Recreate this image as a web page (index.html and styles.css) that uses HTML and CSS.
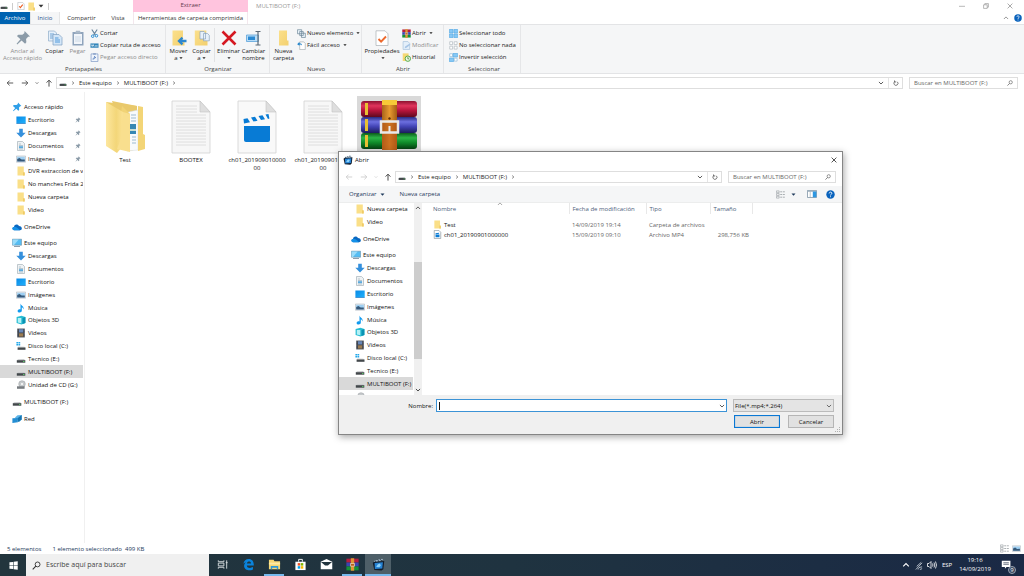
FILE: index.html
```html
<!DOCTYPE html>
<html lang="es">
<head>
<meta charset="utf-8">
<title>MULTIBOOT (F:)</title>
<link rel="stylesheet" href="styles.css">
</head>
<body>
<svg class="sprite" aria-hidden="true">
  <defs>
    <linearGradient id="gFold" x1="0" y1="0" x2="1" y2="1"><stop offset="0" stop-color="#fbe08c"/><stop offset="1" stop-color="#f3d06f"/></linearGradient>
    <linearGradient id="gFlap" x1="0" y1="0" x2="1" y2="0"><stop offset="0" stop-color="#fde79f"/><stop offset=".6" stop-color="#f3d679"/><stop offset="1" stop-color="#fbe294"/></linearGradient>
    <linearGradient id="gRed" x1="0" y1="0" x2="0" y2="1"><stop offset="0" stop-color="#8d1230"/><stop offset=".3" stop-color="#e0345c"/><stop offset=".6" stop-color="#b5143b"/><stop offset="1" stop-color="#5e0a1e"/></linearGradient>
    <linearGradient id="gBlue" x1="0" y1="0" x2="0" y2="1"><stop offset="0" stop-color="#2a2a80"/><stop offset=".3" stop-color="#6c6fe0"/><stop offset=".6" stop-color="#4243b4"/><stop offset="1" stop-color="#1c1c5c"/></linearGradient>
    <linearGradient id="gGreen" x1="0" y1="0" x2="0" y2="1"><stop offset="0" stop-color="#0b5a1a"/><stop offset=".3" stop-color="#2bb547"/><stop offset=".6" stop-color="#108a2a"/><stop offset="1" stop-color="#064012"/></linearGradient>
    <linearGradient id="gBelt" x1="0" y1="0" x2="1" y2="0"><stop offset="0" stop-color="#a8641a"/><stop offset=".5" stop-color="#e89a30"/><stop offset="1" stop-color="#a35c14"/></linearGradient>
    <linearGradient id="gDesk" x1="0" y1="0" x2="1" y2="1"><stop offset="0" stop-color="#0a8ae6"/><stop offset="1" stop-color="#1fb0fb"/></linearGradient>
  </defs>
  <symbol id="folder" viewBox="0 0 10 10"><path d="M1.500 .5h6.300v6.200h.9v2.800H1.500z" fill="#fadf88"/><path d="M7 6.200h1.700v3.300H7z" fill="#efcb66"/></symbol>
  <symbol id="star" viewBox="0 0 10 10"><path d="M6 .6 9.400 4 8.200 4.200 7 5.600l.2 2.400-.9.800-2-2L1.400 9.200 1 8.800l2.200-2.900-2.300-2 .9-.9 2.700.1L5.800 2z" fill="#2f9fe8"/></symbol>
  <symbol id="pin" viewBox="0 0 10 10"><path d="M6 .6 9.400 4 8.200 4.200 6.900 5.600l.2 2.100-.8.900L4.100 6.500 1.400 9 1 8.600l2.400-2.800-2.200-2 .9-.9 2.500.1L5.800 2z" fill="#8b9ba8"/></symbol>
  <symbol id="desktop" viewBox="0 0 10 10"><path d="M.4 1.500h9.300v6.700H.4z" fill="url(#gDesk)"/><path d="M.4 8h9.300v.7H.4z" fill="#0a6dc2"/></symbol>
  <symbol id="down" viewBox="0 0 10 10"><path d="M3.200.8h3.600v4h2.900L5 9.600.3 4.800h2.900z" fill="#3590dc"/></symbol>
  <symbol id="doc" viewBox="0 0 10 10"><path d="M1.500.5h5l2 2v7h-7z" fill="#eef2f4" stroke="#9aa7ae" stroke-width=".6"/><path d="M3 3h2M3 4.500h4M3 8h4" stroke="#92a6b3" stroke-width=".6"/><path d="M3 5.200h4v2H3z" fill="#5aa9dc"/></symbol>
  <symbol id="image" viewBox="0 0 10 10"><path d="M.4 2h9.200v6.200H.4z" fill="#e9eef2" stroke="#a2abb3" stroke-width=".5"/><path d="M1.200 2.800h7.600v4.600H1.200z" fill="#9fd0f3"/><path d="M1.200 5 3.500 4l2.200 1.600 3.100-.2v2H1.200z" fill="#36597a"/></symbol>
  <symbol id="cloud" viewBox="0 0 10 10"><path d="M2.200 8.200C-.3 8 0 5 2 4.900 2.400 2 6 1.700 6.900 4c2 .1 3 1.200 2.900 2.500 0 1-.7 1.700-1.800 1.700z" fill="#0a68c1"/><path d="M2 4.900c1.500-.5 2.600.2 6 3.300H2.200C-.3 8 0 5.200 2 4.900z" fill="#1491e8"/></symbol>
  <symbol id="pc" viewBox="0 0 10 10"><path d="M.4 1.200h9.200v6H.4z" fill="#55bdf3" stroke="#6d8ea5" stroke-width=".6"/><path d="M.7 1.500h6L2 7H.7z" fill="#9adcfa"/><path d="M2 8.200h6v.8H2z" fill="#74879a"/></symbol>
  <symbol id="music" viewBox="0 0 10 10"><path d="M4.500.5c.3 2 3.800 2.500 3 6-.3-1.400-1-2-1.700-2.300v3.600c-.1 2.300-4.300 2.300-4.200 0C1.800 6.300 3.500 5.900 4.500 6.400V.5z" fill="#109af0"/></symbol>
  <symbol id="cube" viewBox="0 0 10 10"><path d="M.6 2 5.500.7 9.400 2v6L5.500 9.500.6 8z" fill="#28bdd3"/><path d="M1.800 3h3.500v5.300L1.800 7.600z" fill="#b5f1f6"/><path d="m6.500 3 2.900-1v6l-2.900 1.100z" fill="#0b93b4"/></symbol>
  <symbol id="video" viewBox="0 0 10 10"><path d="M1.200.6h7.600v8.800H1.200z" fill="#3b4048"/><path d="M3 1.200h4.200v3.300H3z" fill="#6887b8"/><path d="M3 5.300h4.200v3.300H3z" fill="#9b7b52"/><path d="M1.800 1v8M8.200 1v8" stroke="#aab" stroke-width=".5" stroke-dasharray=".7 .7"/></symbol>
  <symbol id="drive" viewBox="0 0 10 10"><path d="m2 5.200 6-.1 1.300 1.300H.8z" fill="#c8cbcd"/><path d="M.8 6.200h8.500v2.500H.8z" fill="#43484b"/><path d="M7 7h1.500v.9H7z" fill="#58c466"/></symbol>
  <symbol id="win" viewBox="0 0 10 10"><path d="m2.400 5.600 6 .1 1 1.100H1.600z" fill="#c8cbcd"/><path d="M1.600 6.500h7.900v2.300H1.600z" fill="#43484b"/><path d="M.4 1h1.700v1.500H.4zm2.100 0h1.700v1.500H2.500zM.4 3h1.700v1.500H.4zm2.100 0h1.700v1.500H2.500z" fill="#23a8ea"/></symbol>
  <symbol id="cd" viewBox="0 0 10 10"><circle cx="6" cy="4" r="3.300" fill="#c6cacc" stroke="#989da1" stroke-width=".5"/><circle cx="6" cy="4" r="1" fill="#fff"/><path d="M1 6.300h7.600v2.500H1z" fill="#777c80"/></symbol>
  <symbol id="net" viewBox="0 0 10 10"><path d="m3 3.500 2.500-2.300L9.700 1v4.500L7.200 8z" fill="#5cb4e8"/><path d="M.4 4.200 5.800 4v4.200L.4 9z" fill="#248ed3"/><path d="m5.800 4 3.900-3v4.500L5.800 8.200z" fill="#1674b0"/></symbol>
  <symbol id="left" viewBox="0 0 10 10"><path d="M9 5H1.500m3-3-3 3 3 3" fill="none" stroke="currentColor" stroke-width="1.100"/></symbol>
  <symbol id="right" viewBox="0 0 10 10"><path d="M1 5h7.500m-3-3 3 3-3 3" fill="none" stroke="currentColor" stroke-width="1.100"/></symbol>
  <symbol id="up" viewBox="0 0 10 10"><path d="M5 9.500V1.500m-3 3 3-3 3 3" fill="none" stroke="currentColor" stroke-width="1.200"/></symbol>
  <symbol id="chev" viewBox="0 0 10 10"><path d="m1.500 3.200 3.500 3.500 3.500-3.500" fill="none" stroke="currentColor" stroke-width="1.600"/></symbol>
  <symbol id="chevup" viewBox="0 0 10 10"><path d="M1.500 6.700 5 3.200l3.500 3.500" fill="none" stroke="currentColor" stroke-width="1.400"/></symbol>
  <symbol id="crumb" viewBox="0 0 10 10"><path d="m3 1.500 4 3.500-4 3.500" fill="none" stroke="currentColor" stroke-width="1.900"/></symbol>
  <symbol id="caret" viewBox="0 0 10 10"><path d="M1 3h8L5 7.500z" fill="currentColor"/></symbol>
  <symbol id="reload" viewBox="0 0 10 10"><path d="M7.200 3A3.400 3.400 0 1 1 3 2.700M2.500.8v2.500h2.800" fill="none" stroke="currentColor" stroke-width="1.300"/></symbol>
  <symbol id="lens" viewBox="0 0 10 10"><circle cx="6.200" cy="3.800" r="2.700" fill="none" stroke="currentColor"/><path d="M4.300 5.800.8 9.300" stroke="currentColor" stroke-width="1.200"/></symbol>
  <symbol id="close" viewBox="0 0 10 10"><path d="m1 1 8 8M9 1 1 9" stroke="currentColor" stroke-width="1.200"/></symbol>
  <symbol id="help" viewBox="0 0 10 10"><circle cx="5" cy="5" r="4.700" fill="#0a63bd"/><path d="M3.500 3.800C3.600 1.800 6.600 2 6.500 3.700 6.400 4.800 5 4.700 5 6.100M5 7v1" fill="none" stroke="#fff"/></symbol>
  <symbol id="check" viewBox="0 0 10 10"><path d="M1 .5h6l2 2v7H1z" fill="#fff" stroke="#a2a9ae" stroke-width=".6"/><path d="m2.700 5.300 1.500 1.800 3-3.800" fill="none" stroke="#ea5b22" stroke-width="1.300"/></symbol>
  <symbol id="copy" viewBox="0 0 16 16"><path d="M1.500 1h6l2 2v8h-8z" fill="#e4effa" stroke="#8facc9" stroke-width=".7"/><path d="M3 4h4M3 6h3M3 8h3" stroke="#6fa4d6"/><path d="M6 4.500h6l3 3V15H6z" fill="#d3e6f8" stroke="#7f9fc0" stroke-width=".7"/><path d="M8 8h3.500M8 10h5M8 12h5" stroke="#529ada"/></symbol>
  <symbol id="paste" viewBox="0 0 16 16"><path d="M2.500 2h11v13.500h-11z" fill="#8fa4bc"/><path d="M4 4h8v10H4z" fill="#f1f5fa"/><path d="M6 .7h4l1 2.800H5z" fill="#a9b8c8"/><path d="M5 7h6M5 9h6M5 11h6" stroke="#c5d3e2" stroke-width=".8"/></symbol>
  <symbol id="cut" viewBox="0 0 10 10"><path d="m2 .5 4 6M8 .5l-4 6" stroke="#66839b" stroke-width="1.200"/><circle cx="3" cy="8" r="1.400" fill="none" stroke="#1683cf"/><circle cx="7.200" cy="7.500" r="1.400" fill="none" stroke="#1683cf"/></symbol>
  <symbol id="path" viewBox="0 0 10 10"><path d="M.5 2.700h9v4.800h-9z" fill="#3285b9"/><path d="m1.500 4 1 2 1-2 1 2m1-.5h3" fill="none" stroke="#fff" stroke-width=".8"/></symbol>
  <symbol id="plink" viewBox="0 0 10 10"><path d="M1.200 1h7.600v8.500H1.200z" fill="#eff4fb" stroke="#7e98c4" stroke-width=".8"/><path d="M3.500.4h3v1.400h-3z" fill="#7e98c4"/><path d="M3.500 7.500c0-2 .5-2.500 2.500-2.500m-1.500-1.500L6.300 5 4.700 6.500" fill="none" stroke="#4f78b8" stroke-width=".9"/></symbol>
  <symbol id="move" viewBox="0 0 16 16"><path d="M1.500.5h10.500v10.500h1.500V15.500h-12z" fill="url(#gFold)"/><path d="M15.500 11H8.500m3-3.300L8 11l3.500 3.300" fill="none" stroke="#2d87cf" stroke-width="2.300"/></symbol>
  <symbol id="copyto" viewBox="0 0 16 16"><path d="M.8.5h11.500V11h1.200v4.500H.8z" fill="url(#gFold)"/><path d="M6 1.500h4l1.500 1.500v6H6zM9.500 3.500h4l1.800 1.800v5.500H9.500z" fill="#e6f0fa" stroke="#8aa3bb" stroke-width=".7"/></symbol>
  <symbol id="delete" viewBox="0 0 16 16"><path d="m1.500 1.500 13 13m0-13-13 13" stroke="#d51821" stroke-width="2.600"/></symbol>
  <symbol id="rename" viewBox="0 0 16 16"><path d="M.5 5h12v6.500H.5z" fill="#b7dcf7" stroke="#5aa2d9" stroke-width=".8"/><path d="M2 6.500h7v3.500H2z" fill="#2c8ad3"/><path d="M9.500 1.500h5M9.500 15h5M12 1.500V15" stroke="#5d6b78" stroke-width="1.200"/></symbol>
  <symbol id="bigfolder" viewBox="0 0 16 16"><path d="M3 .5h8v10h1.500v5H3z" fill="url(#gFold)"/></symbol>
  <symbol id="newitem" viewBox="0 0 10 10"><path d="M.5.8h4.700v4.500H.5zM3 2.800h4v4.500H3zM5 4.700h4.300v4.800H5z" fill="#e8f2f9" stroke="#6f8899" stroke-width=".8"/></symbol>
  <symbol id="access" viewBox="0 0 10 10"><path d="M3 1h4.500L9.200 2.700V9.500H3z" fill="#fff" stroke="#8d989f" stroke-width=".6"/><path d="M.2 3.500 2.500 1l.3 1.500c2 0 2.700.8 2.700 2.500-1-1-1.500-1.200-2.600-1.100l-.2 1.400z" fill="#2486cc"/></symbol>
  <symbol id="props" viewBox="0 0 16 16"><path d="M2 .8h9l3 3v11.700H2z" fill="#fff" stroke="#a9afb3" stroke-width=".7"/><path d="m4.500 9 2.600 2.600L12 6.500" fill="none" stroke="#ed6a2e" stroke-width="1.900"/></symbol>
  <symbol id="rar" viewBox="0 0 10 10"><path d="M.3.5h9.400v3H.3z" fill="#b51d3f"/><path d="M.3 3.500h9.400v3H.3z" fill="#3d45b0"/><path d="M.3 6.500h9.400v3H.3z" fill="#159038"/><path d="M3.700.2h2.600v9.600H3.700z" fill="#e19534"/><path d="M3.500 4.200h3v2.100h-3z" fill="#b75f17" stroke="#f2e8da" stroke-width=".5"/></symbol>
  <symbol id="edit" viewBox="0 0 10 10"><path d="M1.200.6h5.300l2 2v6.800H1.200z" fill="#e4effa" stroke="#a1bedb" stroke-width=".7"/><path d="m3 8 .5-1.800L8.200 3l1.200 1.200L5 7.500z" fill="#a7c5e5"/></symbol>
  <symbol id="history" viewBox="0 0 10 10"><path d="M.8.4h6.500v8.500H.8z" fill="#f6d874"/><circle cx="6.500" cy="6.300" r="3" fill="#edf7e6" stroke="#4ba33c"/><path d="M6.500 4.500v2H8" fill="none" stroke="#387e2c" stroke-width=".8"/></symbol>
  <symbol id="selall" viewBox="0 0 10 10"><path d="M.4.4h4.100v4.100H.4zm5.100 0h4.100v4.100H5.500zM.4 5.500h4.100v4.100H.4zm5.100 0h4.100v4.100H5.500z" fill="#86c8f5" stroke="#4ba4e2" stroke-width=".6"/></symbol>
  <symbol id="selnone" viewBox="0 0 10 10"><path d="M.8.8h3.200v3.200H.8zm5 0H9v3.200H5.800zM.8 5.800H4V9H.8zm5 0H9V9H5.800z" fill="#fff" stroke="#aab4bb" stroke-width=".7"/></symbol>
  <symbol id="selinv" viewBox="0 0 10 10"><path d="M.8.8h3.200v3.200H.8zm5 5H9V9H5.800z" fill="#fff" stroke="#8bb6d6" stroke-width=".7"/><path d="M4.500.4h5.100v4.100H4.500zM.4 5.500h4.700v4.100H.4z" fill="#86c8f5" stroke="#4ba4e2" stroke-width=".6"/></symbol>
  <symbol id="details" viewBox="0 0 10 10"><path d="M.5 1h3v2h-3zM.5 4h3v2h-3zM.5 7h3v2h-3z" fill="none" stroke="currentColor" stroke-width=".6"/><path d="M4.700 2H7m.8 0h2M4.700 5H7m.8 0h2M4.700 8H7m.8 0h2" stroke="currentColor" stroke-width=".8"/></symbol>
  <symbol id="pane" viewBox="0 0 10 10"><path d="M.5 1.500h9v7h-9z" fill="#fff" stroke="#6f879b" stroke-width=".7"/><path d="M.5 1.500h9v1.300h-9z" fill="#9eb0bf"/><path d="M5.800 2.500h3.600v5.800H5.800z" fill="#2c97e2"/><path d="M3.200 2.500v6" stroke="#8ea1b0" stroke-width=".6"/></symbol>
  <symbol id="app" viewBox="0 0 14 14"><path d="M2 3 11 .8l1 1.200-9 2.500z" fill="#a9bdca"/><path d="m.8 5.200 1.200-1 11.200-1-1 8.800-2 1.500-7.700-.5z" fill="#101c2c"/><path d="m2.800 5.300 8.900-.8-.6 6.700-8 .7z" fill="#2683d4"/><path d="m4.500 9.800 1.600-2.700L8.500 6l1 2-1.600 2z" fill="#8bd2fb"/><path d="m3 3 1.500 1M6 2.200 7.500 3.500M9 1.500l1.500 1.300" stroke="#132236"/></symbol>
  <symbol id="bfolder" viewBox="0 0 40 54"><path d="M1 2 32 6v8l1 22 5 0v12l-14 3z" fill="#eccb66"/><path d="m7 1 25 5v6L10 10z" fill="#e9c96c"/><path d="m19 13 14-3v40l-11 1z" fill="#f8fafb" stroke="#d5dadd" stroke-width=".5"/><path d="M26 15h5M26 18h5M26 21h5M27 37h4M27 40h4M27 43h4" stroke="#9dbbd0"/><path d="M25 24h6v10h-6z" fill="#3688b4"/><path d="M25 29h6v2h-6z" fill="#c9dfd3"/><path d="M33 6 38 7v27l2 1v14l-7 2z" fill="#f3d577"/><path d="m17 6 8 8v37l-14-4z" fill="#f1d376"/><path d="m1 2 17 10v34l-6 7L1 46z" fill="url(#gFlap)"/><path d="m18 12 7 2v38l-13-3 3-8z" fill="#f9df8e"/></symbol>
  <symbol id="btext" viewBox="0 0 40 54"><path d="M1 1h28l10 11v41H1z" fill="#f7f7f7" stroke="#d2d2d2" stroke-width=".8"/><path d="M29 1v11h10z" fill="#dedede" stroke="#c4c4c4" stroke-width=".6"/><path d="M5 6h21M5 9h21M5 12h21M5 15h30M5 18h30M5 21h30M5 24h30M5 27h30M5 30h30M5 33h30M5 36h30M5 39h30M5 42h30M5 45h30" stroke="#d8d8d8" stroke-width=".8"/></symbol>
  <symbol id="bvideo" viewBox="0 0 40 54"><path d="M1 1h28l10 11v41H1z" fill="#f9f9f9" stroke="#d2d2d2" stroke-width=".8"/><path d="M29 1v11h10z" fill="#dedede" stroke="#c4c4c4" stroke-width=".6"/><path d="M7 26h26v14q0 2-2 2H9q-2 0-2-2z" fill="#087bd5"/><path d="m6.500 19 4-.8 2.500 4-6 1.300zM14 17.500l4-.8 2.500 4-4 .8zM21.500 16l4-.8 2.500 4-4 .8zM28.500 14.600l3-.6.9 4.600-1.400.3z" fill="#087bd5"/></symbol>
  <symbol id="brar" viewBox="0 0 58 50"><rect x="1" y="1" width="56" height="16" rx="3" fill="url(#gRed)"/><rect x="1" y="17" width="56" height="16" rx="3" fill="url(#gBlue)"/><rect x="1" y="33" width="56" height="16" rx="3" fill="url(#gGreen)"/><path d="M5 3h3v12H5zM5 19h3v12H5zM5 35h3v12H5z" fill="#e9bf34"/><path d="M22 0h15v50H22z" fill="url(#gBelt)"/><path d="M22 0h15v5H22z" fill="#f7c938"/><path d="M22 23h15v27H22z" fill="#b95618" fill-opacity=".6"/><circle cx="29.500" cy="18.500" r="1.200" fill="#603008"/><path d="M21 21.500h17v11H21z" fill="none" stroke="#e9e9ea" stroke-width="2.500"/><path d="M29.500 26v6" stroke="#e9e9ea" stroke-width="2"/></symbol>
  <symbol id="mp4" viewBox="0 0 10 10"><path d="M1.400.5h5.200l2 2v7H1.400z" fill="#fff" stroke="#7e8c96" stroke-width=".7"/><path d="M2.800 5h4.400v3H2.800zM2.800 3.600l4-.6v1.200l-4 .5z" fill="#087bd5"/></symbol>
</svg>

<header>
  <div class="titlebar">
    <div class="quick">
      <svg class="i8"><use href="#drive"/></svg><span class="bar"></span><svg class="i8"><use href="#check"/></svg><svg class="i9"><use href="#folder"/></svg><svg class="i6"><use href="#caret"/></svg><span class="bar"></span>
    </div>
    <div class="context">Extraer</div>
    <h1 class="title">MULTIBOOT (F:)</h1>
    <div class="winbtns">
      <button aria-label="Minimizar"><svg class="i6" viewBox="0 0 10 10"><path d="M0 5.500h10" stroke="currentColor"/></svg></button>
      <button aria-label="Restaurar"><svg class="i6" viewBox="0 0 10 10"><path d="M1 3h6v6H1zM3 3V1h6v6H7" fill="none" stroke="currentColor"/></svg></button>
      <button aria-label="Cerrar"><svg class="i6"><use href="#close"/></svg></button>
    </div>
  </div>
  <nav class="tabs">
    <button class="tab file">Archivo</button><button class="tab on">Inicio</button><button class="tab share">Compartir</button><button class="tab view">Vista</button><button class="tab tools">Herramientas de carpeta comprimida</button>
    <div class="tabend"><svg class="i6"><use href="#chevup"/></svg><svg class="i8"><use href="#help"/></svg></div>
  </nav>
  <div class="ribbon">
    <section class="group g1"><div class="cmds">
      <button class="big w41 dim"><svg><use href="#pin"/></svg>Anclar al<br>Acceso rápido</button>
      <button class="big w22"><svg><use href="#copy"/></svg>Copiar</button>
      <button class="big w22 dim"><svg><use href="#paste"/></svg>Pegar</button>
      <div class="smalls"><button><svg><use href="#cut"/></svg>Cortar</button><button><svg><use href="#path"/></svg>Copiar ruta de acceso</button><button class="dim"><svg><use href="#plink"/></svg>Pegar acceso directo</button></div>
    </div><h2>Portapapeles</h2></section>
    <section class="group g2"><div class="cmds">
      <button class="big w22"><svg><use href="#move"/></svg>Mover<br>a<svg class="dd"><use href="#caret"/></svg></button>
      <button class="big w22"><svg><use href="#copyto"/></svg>Copiar<br>a<svg class="dd"><use href="#caret"/></svg></button>
      <span class="rule"></span>
      <button class="big w25"><svg><use href="#delete"/></svg>Eliminar<br><svg class="dd"><use href="#caret"/></svg></button>
      <button class="big w25"><svg><use href="#rename"/></svg>Cambiar<br>nombre</button>
    </div><h2>Organizar</h2></section>
    <section class="group g3"><div class="cmds">
      <button class="big w25"><svg><use href="#bigfolder"/></svg>Nueva<br>carpeta</button>
      <div class="smalls"><button><svg><use href="#newitem"/></svg>Nuevo elemento<svg class="dd"><use href="#caret"/></svg></button><button><svg><use href="#access"/></svg>Fácil acceso<svg class="dd"><use href="#caret"/></svg></button></div>
    </div><h2>Nuevo</h2></section>
    <section class="group g4"><div class="cmds">
      <button class="big w38"><svg><use href="#props"/></svg>Propiedades<br><svg class="dd"><use href="#caret"/></svg></button>
      <div class="smalls"><button><svg><use href="#rar"/></svg>Abrir<svg class="dd"><use href="#caret"/></svg></button><button class="dim"><svg><use href="#edit"/></svg>Modificar</button><button><svg><use href="#history"/></svg>Historial</button></div>
    </div><h2>Abrir</h2></section>
    <section class="group g5"><div class="cmds">
      <div class="smalls"><button><svg><use href="#selall"/></svg>Seleccionar todo</button><button><svg><use href="#selnone"/></svg>No seleccionar nada</button><button><svg><use href="#selinv"/></svg>Invertir selección</button></div>
    </div><h2>Seleccionar</h2></section>
  </div>
</header>

<div class="navrow">
  <div class="arrows"><svg class="i8"><use href="#left"/></svg><svg class="i8"><use href="#right"/></svg><svg class="i4"><use href="#chev"/></svg><svg class="i8"><use href="#up"/></svg></div>
  <div class="address"><svg class="i8"><use href="#drive"/></svg><svg class="i4"><use href="#crumb"/></svg><a href="#pc">Este equipo</a><svg class="i4"><use href="#crumb"/></svg><a href="#f">MULTIBOOT (F:)</a><svg class="i4"><use href="#crumb"/></svg><span class="fill"></span><svg class="i6"><use href="#chev"/></svg><span class="reload"><svg class="i6"><use href="#reload"/></svg></span></div>
  <label class="search"><input type="text" aria-label="Buscar" placeholder="Buscar en MULTIBOOT (F:)"><svg class="i6"><use href="#lens"/></svg></label>
</div>

<main>
  <nav class="tree">
    <div class="rows quickrows">
      <a class="row top" href="#q"><svg><use href="#star"/></svg>Acceso rápido</a>
      <a class="row" href="#q"><svg><use href="#desktop"/></svg>Escritorio<svg class="pinned"><use href="#pin"/></svg></a>
      <a class="row" href="#q"><svg><use href="#down"/></svg>Descargas<svg class="pinned"><use href="#pin"/></svg></a>
      <a class="row" href="#q"><svg><use href="#doc"/></svg>Documentos<svg class="pinned"><use href="#pin"/></svg></a>
      <a class="row" href="#q"><svg><use href="#image"/></svg>Imágenes<svg class="pinned"><use href="#pin"/></svg></a>
      <a class="row" href="#q"><svg><use href="#folder"/></svg>DVR extraccion de v</a>
      <a class="row" href="#q"><svg><use href="#folder"/></svg>No manches Frida 2</a>
      <a class="row" href="#q"><svg><use href="#folder"/></svg>Nueva carpeta</a>
      <a class="row" href="#q"><svg><use href="#folder"/></svg>Video</a>
    </div>
    <div class="rows one"><a class="row top" href="#o"><svg><use href="#cloud"/></svg>OneDrive</a></div>
    <div class="rows pcrows">
      <a class="row top" href="#p"><svg><use href="#pc"/></svg>Este equipo</a>
      <a class="row" href="#p"><svg><use href="#down"/></svg>Descargas</a>
      <a class="row" href="#p"><svg><use href="#doc"/></svg>Documentos</a>
      <a class="row" href="#p"><svg><use href="#desktop"/></svg>Escritorio</a>
      <a class="row" href="#p"><svg><use href="#image"/></svg>Imágenes</a>
      <a class="row" href="#p"><svg><use href="#music"/></svg>Música</a>
      <a class="row" href="#p"><svg><use href="#cube"/></svg>Objetos 3D</a>
      <a class="row" href="#p"><svg><use href="#video"/></svg>Vídeos</a>
      <a class="row" href="#p"><svg><use href="#win"/></svg>Disco local (C:)</a>
      <a class="row" href="#p"><svg><use href="#drive"/></svg>Tecnico (E:)</a>
      <a class="row sel" href="#p"><svg><use href="#drive"/></svg>MULTIBOOT (F:)</a>
      <a class="row" href="#p"><svg><use href="#cd"/></svg>Unidad de CD (G:)</a>
    </div>
    <div class="rows one"><a class="row top" href="#m"><svg><use href="#drive"/></svg>MULTIBOOT (F:)</a></div>
    <div class="rows one"><a class="row top" href="#r"><svg><use href="#net"/></svg>Red</a></div>
  </nav>
  <div class="files">
    <figure><svg><use href="#bfolder"/></svg><figcaption>Test</figcaption></figure>
    <figure><svg><use href="#btext"/></svg><figcaption>BOOTEX</figcaption></figure>
    <figure><svg><use href="#bvideo"/></svg><figcaption>ch01_20190901000000</figcaption></figure>
    <figure><svg><use href="#btext"/></svg><figcaption>ch01_20190901000000</figcaption></figure>
    <figure class="picked"><svg><use href="#brar"/></svg></figure>
  </div>
</main>

<footer class="status"><span>5 elementos</span><span>1 elemento seleccionado&nbsp; 499 KB</span><span class="fill"></span><svg class="i9 gray"><use href="#details"/></svg><svg class="i9"><use href="#image"/></svg></footer>

<div class="taskbar">
  <button class="start" aria-label="Inicio"><svg viewBox="0 0 10 10"><path d="M.5 1.500 4.600 1v3.700H.5zM5.200.9 9.700.3v4.400H5.200zM.5 5.300h4.100V9L.5 8.500zm4.700 0h4.500v4.400l-4.500-.6z" fill="#fff"/></svg></button>
  <label class="tsearch"><svg class="i9"><use href="#lens"/></svg><input type="text" aria-label="Buscar en Windows" placeholder="Escribe aquí para buscar"></label>
  <button class="task" aria-label="Vista de tareas"><svg viewBox="0 0 14 14"><path d="M2.500 2.500V4h6V2.500M2.500 11.500V10h6v1.500M2.500 5.500h6v3h-6zM11.500 2.500v9M10.500 5h2" fill="none" stroke="#d7dde0"/></svg></button>
  <button class="task" aria-label="Edge"><svg viewBox="0 0 14 14"><path d="M1.500 6.300C2 2.800 4.300 1 7.200 1c3.700 0 5.700 2.700 5.500 7H5.200c.2 3.100 4 3.300 6.600 1.800v2.600C7.300 14.600 1.700 12.600 2.300 8c.2-1.500 1-2.600 2.200-3.400-1 .2-2.200.8-3 1.700zM5.300 6h4.400C9.600 3.200 5.700 3.200 5.300 6z" fill="#0a83dc"/></svg></button>
  <button class="task open" aria-label="Explorador"><svg viewBox="0 0 14 14"><path d="M1 2h5l1 1.500h6V12H1z" fill="#f7d774"/><path d="M1 5h12v2H1z" fill="#fdeaa5"/><path d="M3 8.500h8V12H9.500v-1.500h-5V12H3z" fill="#2e98d8"/></svg></button>
  <button class="task" aria-label="Tienda"><svg viewBox="0 0 14 14"><path d="M5 4V1.500h4V4" fill="none" stroke="#fff"/><path d="M1.500 4h11v9h-11z" fill="#fff"/><path d="M4 5.500h2.700v2.700H4z" fill="#f05223"/><path d="M7.300 5.500H10v2.700H7.300z" fill="#7eb900"/><path d="M4 8.800h2.700v2.700H4z" fill="#00a3ee"/><path d="M7.300 8.800H10v2.700H7.300z" fill="#fdb800"/></svg></button>
  <button class="task" aria-label="Correo"><svg viewBox="0 0 14 14"><path d="M.8 4 7 1l6.200 3v8H.8z" fill="#fff"/><path d="M1 4.200h12L8.500 8h-3z" fill="#22353f"/></svg></button>
  <button class="task open" aria-label="WinRAR"><svg><use href="#rar"/></svg></button>
  <button class="task open active" aria-label="Reproductor"><svg><use href="#app"/></svg></button>
  <span class="fill"></span>
  <div class="tray">
    <svg class="i8"><use href="#chevup"/></svg>
    <svg class="i9" viewBox="0 0 10 10"><path d="M2 9.500 9 2M4.500 9.500C4.500 8 5.500 7 9 6.500M6.500 9.500 9 8.500M3 6l5-4.500" fill="none" stroke="#d3dae1" stroke-width=".9"/></svg>
    <svg class="i10" viewBox="0 0 10 10"><path d="M.5 3.500H2L4 1.500v7L2 6.500H.5zM5.500 3.500q1 1.500 0 3M7 2.500q1.600 2.500 0 5M8.500 1.500q2 3.500 0 7" fill="none" stroke="#fff" stroke-width=".8"/></svg>
    <span>ESP</span>
    <div class="clock">19:16<br>14/09/2019</div>
    <div class="note"><svg viewBox="0 0 14 14"><path d="M1 1h11v8H7l-2 2V9H1z" fill="#fff"/><path d="M3 3.500h7M3 5.500h7" stroke="#1b2a42" stroke-width=".8"/></svg><b>9</b></div>
  </div>
</div>

<div class="dialog" role="dialog" aria-label="Abrir">
  <div class="dtitle"><svg class="i10"><use href="#app"/></svg>Abrir<span class="fill"></span><button aria-label="Cerrar"><svg class="i6"><use href="#close"/></svg></button></div>
  <div class="navrow dnav">
    <div class="arrows"><svg class="i8 off"><use href="#left"/></svg><svg class="i8 off"><use href="#right"/></svg><svg class="i4 off"><use href="#chev"/></svg><svg class="i8"><use href="#up"/></svg></div>
    <div class="address"><svg class="i8"><use href="#drive"/></svg><svg class="i4"><use href="#crumb"/></svg><a href="#pc">Este equipo</a><svg class="i4"><use href="#crumb"/></svg><a href="#f">MULTIBOOT (F:)</a><svg class="i4"><use href="#crumb"/></svg><span class="fill"></span><svg class="i6"><use href="#chev"/></svg><span class="reload"><svg class="i6"><use href="#reload"/></svg></span></div>
    <label class="search"><input type="text" aria-label="Buscar" placeholder="Buscar en MULTIBOOT (F:)"><svg class="i6"><use href="#lens"/></svg></label>
  </div>
  <div class="dtools"><button>Organizar<svg class="i5"><use href="#caret"/></svg></button><button>Nueva carpeta</button><span class="fill"></span><svg class="i9 gray"><use href="#details"/></svg><svg class="i5"><use href="#caret"/></svg><svg class="i10 pane"><use href="#pane"/></svg><svg class="i9"><use href="#help"/></svg></div>
  <div class="dbody">
    <nav class="tree dtree">
      <div class="rows two">
        <a class="row" href="#q"><svg><use href="#folder"/></svg>Nueva carpeta</a>
        <a class="row" href="#q"><svg><use href="#folder"/></svg>Video</a>
      </div>
      <div class="rows one"><a class="row top" href="#o"><svg><use href="#cloud"/></svg>OneDrive</a></div>
      <div class="rows pcrows">
        <a class="row top" href="#p"><svg><use href="#pc"/></svg>Este equipo</a>
        <a class="row" href="#p"><svg><use href="#down"/></svg>Descargas</a>
        <a class="row" href="#p"><svg><use href="#doc"/></svg>Documentos</a>
        <a class="row" href="#p"><svg><use href="#desktop"/></svg>Escritorio</a>
        <a class="row" href="#p"><svg><use href="#image"/></svg>Imágenes</a>
        <a class="row" href="#p"><svg><use href="#music"/></svg>Música</a>
        <a class="row" href="#p"><svg><use href="#cube"/></svg>Objetos 3D</a>
        <a class="row" href="#p"><svg><use href="#video"/></svg>Vídeos</a>
        <a class="row" href="#p"><svg><use href="#win"/></svg>Disco local (C:)</a>
        <a class="row" href="#p"><svg><use href="#drive"/></svg>Tecnico (E:)</a>
        <a class="row sel" href="#p"><svg><use href="#drive"/></svg>MULTIBOOT (F:)</a>
        <a class="row" href="#p" aria-label="CD"><svg><use href="#cd"/></svg></a>
      </div>
    </nav>
    <div class="scroll"><svg class="i6"><use href="#chevup"/></svg><div class="track"><div class="thumb"></div></div><svg class="i6"><use href="#chev"/></svg></div>
    <div class="listing">
      <svg class="i6 sort"><use href="#chevup"/></svg>
      <table>
        <colgroup><col class="c1"><col class="c2"><col class="c3"><col class="c4"><col></colgroup>
        <thead><tr><th>Nombre</th><th>Fecha de modificación</th><th>Tipo</th><th>Tamaño</th><td></td></tr></thead>
        <tbody>
          <tr><td class="name"><span><svg class="i9"><use href="#folder"/></svg>Test</span></td><td>14/09/2019 19:14</td><td>Carpeta de archivos</td><td></td><td></td></tr>
          <tr><td class="name"><span><svg class="i9"><use href="#mp4"/></svg>ch01_20190901000000</span></td><td>15/09/2019 09:10</td><td>Archivo MP4</td><td class="size">298,756 KB</td><td></td></tr>
        </tbody>
      </table>
    </div>
  </div>
  <div class="dfoot">
    <label for="fname">Nombre:</label>
    <div class="combo"><input id="fname" type="text"><span class="cursor"></span><svg class="i6"><use href="#chev"/></svg></div>
    <div class="kind"><select aria-label="Tipo de archivo"><option>File(*.mp4;*.264)</option></select><svg class="i6"><use href="#chev"/></svg></div>
    <div class="actions"><button class="ok">Abrir</button><button>Cancelar</button></div>
    <svg class="grip" viewBox="0 0 6 6"><path d="M4 0h1v1H4zM2 2h1v1H2zM4 2h1v1H4zM0 4h1v1H0zM2 4h1v1H2zM4 4h1v1H4z" fill="#b0b0b0"/></svg>
  </div>
</div>
</body>
</html>
```
FILE: styles.css
```css
* { box-sizing: border-box; }
body { margin: 0; height: 100vh; display: flex; flex-direction: column; background: #fff; color: #111; font: 6px/8px "Open Sans", "Noto Sans", sans-serif; overflow: hidden; position: relative; }
button, input, select { font: inherit; color: inherit; border: 0; padding: 0; margin: 0; background: none; border-radius: 0; outline: 0; }
button { display: flex; align-items: center; justify-content: center; white-space: nowrap; }
a { color: inherit; text-decoration: none; white-space: nowrap; }
h1, h2, figure { margin: 0; font: inherit; }
svg { flex: none; display: block; }
.sprite { position: absolute; width: 0; height: 0; }
.i4 { width: 4px; height: 4px; }
.i5 { width: 5px; height: 5px; }
.i6 { width: 6px; height: 6px; }
.i8 { width: 8px; height: 8px; }
.i9 { width: 9px; height: 9px; }
.i10 { width: 10px; height: 10px; }
.fill { flex: 1; }
.off { color: #ccc; }
.gray { color: #8c9297; }

.titlebar { display: flex; height: 12px; }
.quick { width: 133px; display: flex; align-items: center; gap: 2px; color: #333; }
.quick .bar { width: 1px; height: 7px; margin: 0 2px; background: #ccc; }
.context { width: 115px; background: #ffc4de; color: #643c4f; text-align: center; line-height: 11px; }
.title { flex: 1; padding-left: 8px; color: #999; line-height: 12px; }
.winbtns { display: flex; gap: 18px; padding-right: 11px; color: #888; }
.tabs { display: flex; height: 12px; color: #333; }
.tab { height: 12px; }
.file { width: 30px; background: #0063b1; color: #fff; }
.on { width: 30px; background: #f5f6f7; border: 1px solid #e4e5e6; border-width: 0 1px; color: #1f4e8c; }
.share { width: 43px; }
.view { width: 30px; }
.tools { width: 115px; border: 1px solid #f3e7ed; border-width: 0 1px; }
.tabend { flex: 1; display: flex; justify-content: flex-end; align-items: center; gap: 5px; padding-right: 2px; color: #888; }

.ribbon { display: flex; height: 50px; background: #f5f6f7; border: 1px solid #e3e4e6; border-width: 1px 0; color: #222; }
.group { display: flex; flex-direction: column; justify-content: space-between; border-right: 1px solid #e5e6e8; }
.group h2 { text-align: center; line-height: 8px; color: #444; }
.g1 { width: 166px; padding-left: 2px; }
.g2 { width: 104px; padding-left: 1px; }
.g3 { width: 92px; padding-left: 1px; }
.g4 { width: 82px; padding-left: 1px; }
.g5 { width: 77px; padding-left: 4px; }
.cmds { display: flex; padding-top: 3px; }
.big { display: block; text-align: center; line-height: 7px; align-self: flex-start; }
.big > svg { width: 16px; height: 16px; margin: 2px auto; }
.big .dd, .dd { display: inline-block; width: 4px; height: 4px; margin: 0 0 0 1px; }
.w22 { width: 23px; }
.w25 { width: 25px; }
.w38 { width: 38px; }
.w41 { width: 41px; }
.rule { width: 1px; margin: 0 1px; background: #e1e2e4; }
.smalls { display: flex; flex-direction: column; gap: 2px; padding-left: 1px; }
.smalls button { height: 10px; gap: 1px; justify-content: flex-start; }
.smalls svg { width: 9px; height: 9px; }
.smalls .dd { width: 4px; height: 4px; margin-left: 2px; }
.dim { color: #8d8d8d; }

.navrow { display: flex; align-items: center; height: 18px; padding-right: 6px; }
.arrows { display: flex; align-items: center; gap: 7px; width: 56px; padding-left: 6px; color: #444; }
.arrows .i4 { margin: 0 -1px; }
.address { flex: 1; height: 12px; display: flex; align-items: center; gap: 4px; border: 1px solid #dedede; padding-left: 2px; color: #222; }
.address > .i4, .address > .i6 { color: #555; }
.reload { width: 14px; height: 10px; display: flex; align-items: center; justify-content: center; border-left: 1px solid #e5e5e5; color: #555; }
.search { width: 109px; height: 12px; margin-left: 6px; padding: 0 4px; display: flex; align-items: center; border: 1px solid #dedede; color: #555; }
.search input { flex: 1; min-width: 0; height: 10px; }
input::placeholder { color: #666; opacity: 1; }

main { flex: 1; display: flex; min-height: 0; }
.tree { width: 85px; padding: 9px 1px 0 0; border-right: 1px solid #f0f0f0; display: flex; flex-direction: column; gap: 4px; overflow: hidden; }
.rows { flex: none; display: flex; flex-direction: column; }
.quickrows { height: 115px; }
.pcrows { height: 154px; }
.one { height: 13px; }
.two { height: 25px; }
.row { flex: 1; min-height: 0; display: flex; align-items: center; gap: 2px; padding-left: 16px; overflow: hidden; }
.row svg { width: 10px; height: 10px; }
.row.top { padding-left: 12px; }
.row.sel { background: #d9d9d9; }
.row .pinned { width: 6px; height: 6px; margin: 0 2px 0 auto; }
.files { flex: 1; display: flex; align-items: flex-start; gap: 2px; padding: 4px 0 0 8px; }
.files figure { width: 64px; padding-top: 4px; text-align: center; }
.files figure > svg { width: 40px; height: 54px; margin: 0 auto; }
.files figcaption { padding: 2px; line-height: 8px; overflow-wrap: anywhere; }
.files .picked { background: #d9d9d9; height: 66px; }
.files .picked > svg { width: 58px; height: 50px; }

.status { display: flex; align-items: center; height: 11px; padding: 0 3px 0 7px; gap: 11px; color: #1e395b; }
.status svg + svg { margin-left: -8px; }
.taskbar { display: flex; height: 22px; background: linear-gradient(90deg, #22353d, #1f3340 50%, #1a2945); color: #fff; }
.start { width: 26px; }
.start svg { width: 9px; height: 9px; }
.tsearch { width: 183px; display: flex; align-items: center; gap: 5px; padding-left: 6px; background: #f0f0f0; color: #333; font-size: 7px; }
.tsearch input { flex: 1; min-width: 0; }
.tsearch input::placeholder { color: #444; }
.task { width: 26px; border-bottom: 2px solid transparent; }
.task svg { width: 13px; height: 13px; }
.open { background: linear-gradient(#76b9ed, #76b9ed) center bottom / 20px 2px no-repeat border-box; }
.active { background: #4e5f68; border-bottom-color: #76b9ed; }
.tray { display: flex; align-items: center; gap: 4px; padding-right: 8px; }
.tray span { margin: 0 3px 0 1px; }
.clock { text-align: center; line-height: 9px; }
.note { width: 15px; position: relative; margin-left: 6px; }
.note svg { width: 11px; height: 11px; }
.note b { position: absolute; right: 0; bottom: -3px; width: 8px; height: 8px; border-radius: 50%; background: #33415a; border: 1px solid #9aa4b2; font-weight: 400; line-height: 6px; text-align: center; }

.dialog { position: absolute; left: 338px; top: 151px; width: 505px; display: flex; flex-direction: column; background: #fff; border: 1px solid #858585; box-shadow: 1px 2px 7px rgba(0, 0, 0, .35); }
.dtitle { height: 16px; display: flex; align-items: center; gap: 2px; padding: 0 5px 0 4px; }
.dnav { height: 18px; }
.dnav .search { width: 108px; }
.dtools { height: 17px; display: flex; align-items: center; gap: 6px; padding: 0 7px 0 10px; background: #f5f6f7; border-bottom: 1px solid #eceded; color: #1e395b; }
.dtools button { gap: 3px; margin-right: 9px; }
.dtools .pane { margin: 0 3px 0 5px; }
.dbody { display: flex; height: 192px; }
.dtree { width: 75px; padding-top: 0; border-right: 0; }
.dtree .row { padding-left: 16px; }
.dtree .row.top { padding-left: 12px; }
.scroll { width: 8px; display: flex; flex-direction: column; align-items: center; justify-content: space-between; background: #f0f0f0; padding: 2px 0; color: #444; }
.track { flex: 1; width: 8px; padding: 51px 0 28px; display: flex; }
.thumb { flex: 1; background: #cdcdcd; }
.listing { flex: 1; position: relative; padding-left: 8px; }
.sort { position: absolute; left: 75px; top: -2px; color: #999; }
table { width: 100%; table-layout: fixed; border-collapse: collapse; color: #666; }
.c1 { width: 139px; }
.c2 { width: 77px; }
.c3 { width: 64px; }
.c4 { width: 42px; }
th, td { height: 11px; padding: 0 3px; text-align: left; font-weight: 400; white-space: nowrap; }
th { height: 14px; color: #4c607a; border-right: 1px solid #e8e8e8; }
thead tr { border-bottom: 6px solid transparent; }
.name { color: #111; }
.name span { display: flex; align-items: center; gap: 2px; }
.size { text-align: right; }
.dfoot { display: grid; grid-template-columns: 95px 1fr 101px; gap: 3px 0; padding: 4px 8px 6px 0; background: #f0f0f0; position: relative; align-items: center; }
.dfoot > label { text-align: right; padding-right: 1px; }
.combo { display: flex; align-items: center; height: 13px; margin: 0 6px 0 2px; padding-right: 1px; background: #fff; border: 1px solid #3c93d6; color: #555; position: relative; }
.combo input { flex: 1; min-width: 0; padding-left: 3px; }
.cursor { position: absolute; left: 2px; top: 2px; width: 1px; height: 8px; background: #111; }
.kind { position: relative; height: 13px; border: 1px solid #bbb; background: #e4e4e4; }
.kind select { width: 100%; height: 11px; appearance: none; padding-left: 1px; }
.kind svg { position: absolute; right: 1px; top: 3px; color: #666; pointer-events: none; }
.actions { grid-column: 3; display: flex; gap: 8px; padding-left: 1px; }
.actions button { flex: 1; height: 13px; background: #e1e1e1; border: 1px solid #b5b5b5; }
.actions .ok { border-color: #0b78d4; box-shadow: inset 0 0 1px #0b78d4; }
.grip { position: absolute; right: 1px; bottom: 1px; width: 6px; height: 6px; }
```
